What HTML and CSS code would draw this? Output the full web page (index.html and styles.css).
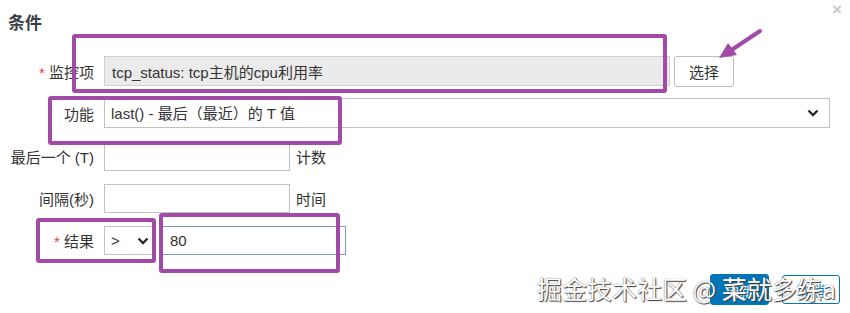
FILE: index.html
```html
<!DOCTYPE html>
<html lang="zh">
<head>
  <meta charset="UTF-8">
  <title>条件</title>
  <link rel="stylesheet" href="styles.css">
</head>
<body>
  <div class="dialog">
    <div class="dialog-header">
      <h2>条件</h2>
      <span class="close">&times;</span>
    </div>

    <form class="cond-form">
      <div class="row">
        <label><span class="req">*</span> 监控项</label>
        <input class="field field-item" type="text" value="tcp_status: tcp主机的cpu利用率" readonly>
        <button type="button" class="btn-select">选择</button>
      </div>

      <div class="row row-func">
        <label>功能</label>
        <div class="select-wrap select-func">
          <select class="field">
            <option>last() - 最后（最近）的 T 值</option>
          </select>
          <svg class="chev" viewBox="0 0 12 8"><path d="M1.5 1.5 L6 6 L10.5 1.5" /></svg>
        </div>
      </div>

      <div class="row row-sm">
        <label>最后一个 (T)</label>
        <input class="field field-short" type="text">
        <span class="suffix">计数</span>
      </div>

      <div class="row row-sm">
        <label>间隔(秒)</label>
        <input class="field field-short" type="text">
        <span class="suffix">时间</span>
      </div>

      <div class="row row-sm">
        <label><span class="req">*</span> 结果</label>
        <div class="select-wrap select-op">
          <select class="field">
            <option>&gt;</option>
          </select>
          <svg class="chev" viewBox="0 0 12 8"><path d="M1.5 1.5 L6 6 L10.5 1.5" /></svg>
        </div>
        <input class="field field-value" type="text" value="80">
      </div>

      <div class="footer">
        <button type="button" class="btn btn-primary">更新</button>
        <button type="button" class="btn btn-outline">取消</button>
      </div>
    </form>

    <!-- annotations drawn on top of the screenshot -->
    <div class="mark mark-item"></div>
    <div class="mark mark-func"></div>
    <div class="mark mark-op"></div>
    <div class="mark mark-value"></div>
    <svg class="arrow" width="60" height="40" viewBox="0 0 60 40">
      <path d="M52 4 L22 24" stroke="#a24aa7" stroke-width="4" stroke-linecap="round" />
      <polygon points="11,31 20,16 29,28" fill="#a24aa7" />
    </svg>

    <div class="watermark">掘金技术社区 @ 菜就多练a</div>
  </div>
</body>
</html>
```

FILE: styles.css
```css
body {
  margin: 0;
  font-family: "Liberation Sans", "Noto Sans CJK SC", sans-serif;
  color: #333;
  background: #fff;
}

.dialog {
  position: relative;
  width: 850px;
  height: 313px;
  overflow: hidden;
}

.dialog-header {
  height: 42px;
  padding: 0 8px;
  display: flex;
  align-items: center;
  justify-content: space-between;
}

.dialog-header h2 {
  margin: 0;
  font-size: 17px;
  font-weight: bold;
  color: #3a4046;
}

.close {
  align-self: flex-start;
  margin-top: 2px;
  font-size: 17px;
  line-height: 16px;
  color: #c8c8c8;
  font-weight: bold;
}

.cond-form {
  margin-top: 14px;
}

.row {
  display: flex;
  align-items: center;
  height: 30px;
  margin-bottom: 12px;
  font-size: 15px;
}

.row-func {
  margin-bottom: 14px;
}

.row-sm {
  height: 29px;
  margin-bottom: 13px;
}

.row label {
  width: 104px;
  padding-right: 10px;
  box-sizing: border-box;
  text-align: right;
  white-space: nowrap;
}

.req {
  color: #e2423a;
}

.field {
  height: 100%;
  box-sizing: border-box;
  border: 1px solid #c2c2c2;
  background: #fff;
  font-family: inherit;
  font-size: 15px;
  color: #333;
  padding: 0 7px;
  outline: none;
}

.field-item {
  width: 566px;
  background: #ebebeb;
  border-color: #cfcfcf;
}

.btn-select {
  margin-left: 4px;
  width: 60px;
  height: 31px;
  box-sizing: border-box;
  border: 1px solid #bdbdbd;
  border-radius: 3px;
  background: #fff;
  font-family: inherit;
  font-size: 15px;
  color: #333;
}

.select-wrap {
  position: relative;
  height: 100%;
}

.select-wrap select {
  width: 100%;
  appearance: none;
  -webkit-appearance: none;
  padding-left: 6px;
}

.select-func {
  width: 726px;
}

.select-op {
  width: 49px;
}

.chev {
  position: absolute;
  top: 50%;
  width: 12px;
  height: 8px;
  margin-top: -4px;
  fill: none;
  stroke: #2a2a2a;
  stroke-width: 2.4;
}

.select-func .chev {
  right: 11px;
}

.select-op .chev {
  right: 4px;
}

.field-short {
  width: 186px;
}

.suffix {
  margin-left: 6px;
}

.field-value {
  margin-left: 9px;
  width: 184px;
  border-color: #7d9db3;
}

.footer {
  display: flex;
  justify-content: flex-end;
  gap: 13px;
  padding-right: 10px;
  margin-top: 19px;
}

.btn {
  width: 59px;
  height: 31px;
  box-sizing: border-box;
  border-radius: 3px;
  font-family: inherit;
  font-size: 14px;
}

.btn-primary {
  background: #0275b8;
  border: 1px solid #0275b8;
  color: #fff;
}

.btn-outline {
  width: 58px;
  height: 29px;
  margin-top: 1px;
  background: #fff;
  border: 1px solid #0275b8;
  color: #0275b8;
}

.mark {
  position: absolute;
  border: 4px solid #a24aa7;
  border-radius: 3px;
  box-sizing: border-box;
}

.mark-item {
  left: 72px;
  top: 34px;
  width: 595px;
  height: 59px;
}

.mark-func {
  left: 48px;
  top: 96px;
  width: 294px;
  height: 49px;
}

.mark-op {
  left: 36px;
  top: 218px;
  width: 120px;
  height: 45px;
}

.mark-value {
  left: 159px;
  top: 213px;
  width: 181px;
  height: 60px;
}

.arrow {
  position: absolute;
  left: 708px;
  top: 27px;
}

.watermark {
  position: absolute;
  left: 537px;
  top: 272px;
  font-family: "Noto Sans CJK SC", sans-serif;
  font-size: 25px;
  line-height: 33px;
  color: #fff;
  white-space: nowrap;
  text-shadow: 1px 1px 1px #3c3c3c, 0 0 1px #555;
}
```
